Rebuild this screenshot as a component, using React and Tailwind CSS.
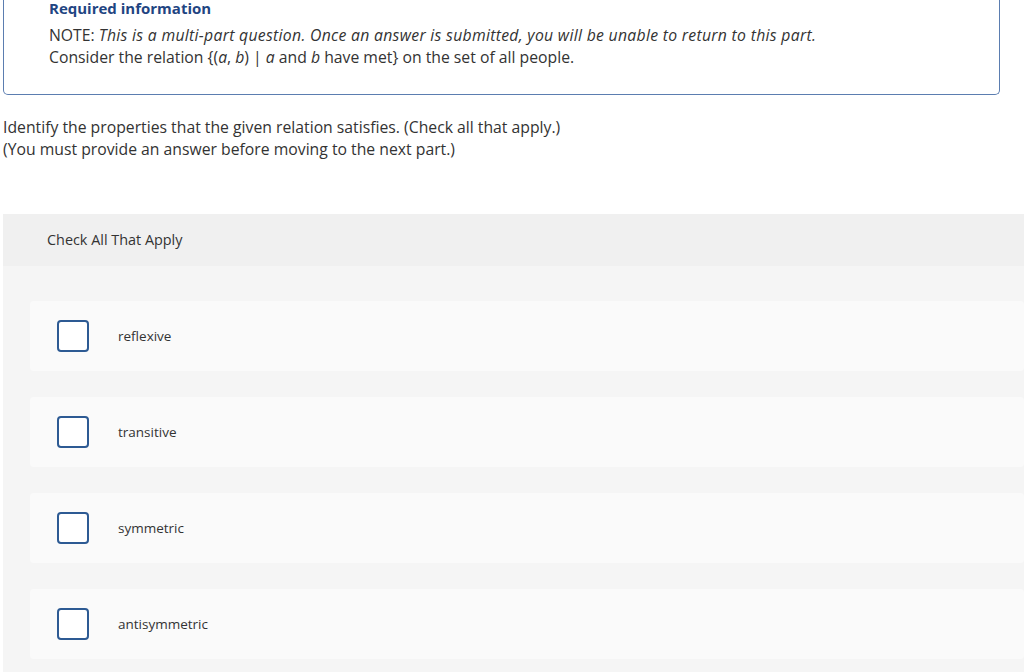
const options = ['reflexive', 'transitive', 'symmetric', 'antisymmetric'];

const Checkbox = () => (
    <div className="w-[32px] h-[32px] shrink-0 rounded-[4px] border-2 border-[#2d5a93] bg-white"></div>
);

export default function App() {
    return (
        <div className="w-[1024px] h-[672px] overflow-hidden bg-white text-[#333] font-['Open_Sans',sans-serif]">
            <div className="ml-[3px] w-[997px] h-[95px] border border-t-0 border-[#5b7db0] rounded-b-[5px] pl-[45px]">
                <h2 className="text-[15px] leading-[16px] font-bold text-[#1f4582]">Required information</h2>
                <div className="mt-[9px] text-[15.75px] leading-[21.5px]">
                    <p>
                        NOTE: <i className="tracking-[0.3px]">This is a multi-part question. Once an answer is submitted, you will be unable to return to this part.</i>
                    </p>
                    <p>
                        Consider the relation {'{'}(<i>a</i>, <i>b</i>) | <i>a</i> and <i>b</i> have met{'}'} on the set of all people.
                    </p>
                </div>
            </div>

            <div className="ml-[3px] mt-[21px] text-[15.75px] leading-[22px]">
                <p>Identify the properties that the given relation satisfies. (Check all that apply.)</p>
                <p>(You must provide an answer before moving to the next part.)</p>
            </div>

            <div className="ml-[3px] mt-[54px] bg-[#f5f5f5]">
                <div className="h-[52px] bg-[#f0f0f0] pl-[44px] flex items-center text-[14.4px]">
                    Check All That Apply
                </div>
                <ul className="pl-[27px] pt-[35px] pb-[20px] space-y-[26px]">
                    {options.map((o) => (
                        <li key={o} className="h-[70px] bg-[#fafafa] rounded-[4px] flex items-center pl-[27px]">
                            <Checkbox />
                            <span className="ml-[29px] text-[13.5px]">{o}</span>
                        </li>
                    ))}
                </ul>
            </div>
        </div>
    );
}
